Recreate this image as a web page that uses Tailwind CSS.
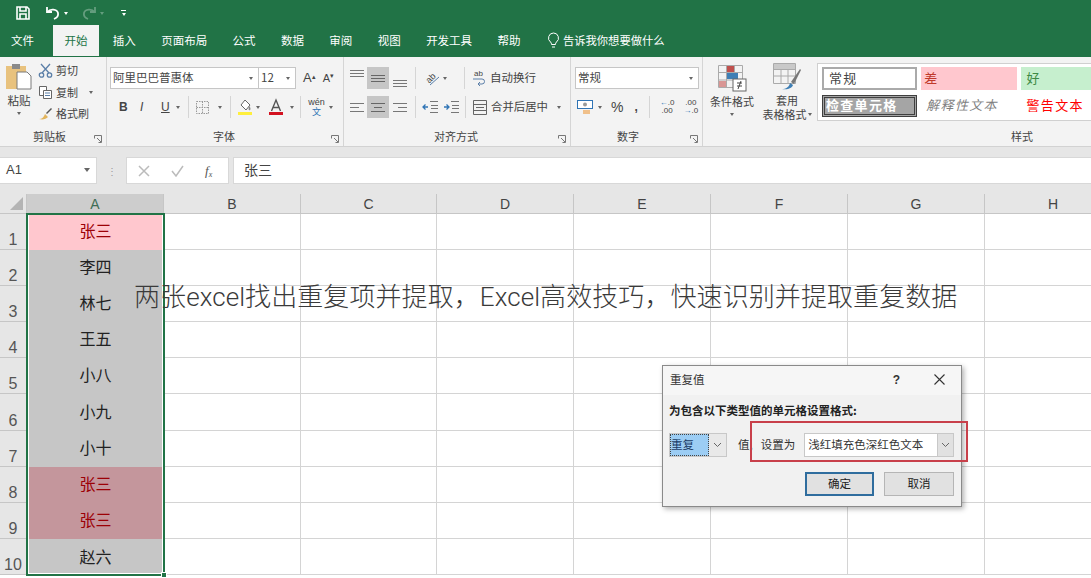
<!DOCTYPE html>
<html lang="zh-CN">
<head>
  <meta charset="UTF-8" />
  <title>重复值</title>
  <script src="https://cdn.jsdelivr.net/npm/@tailwindcss/browser@4"></script>
</head>
<body class="bg-white overflow-hidden font-['Noto_Sans_CJK_SC','Noto_Sans',sans-serif] text-[11px] text-[#444]">
<div class="relative w-[1091px] h-[578px] overflow-hidden bg-[#e6e6e6]">

  <!-- 标题栏 -->
  <div class="h-[26px] bg-[#217346] flex items-center pl-[15px] gap-[14px]">
    <svg width="16" height="16" viewBox="0 0 16 16" fill="none" stroke="#fff" stroke-width="1.6"><path d="M2 2h10l2 2v10H2z"/><path d="M5 2v4h6V2M5 14V9h6v5"/></svg>
    <div class="flex items-center gap-[3px]">
      <svg width="16" height="14" viewBox="0 0 16 14" fill="none" stroke="#fff" stroke-width="1.8"><path d="M2 1v5h5"/><path d="M2.5 6C5 2.5 12 3 13 7c.6 3-1.5 5-4 6"/></svg>
      <span class="w-0 h-0 border-x-[2.5px] border-x-transparent border-t-[3px] border-t-white"></span>
    </div>
    <div class="flex items-center gap-[3px] opacity-30 -ml-[1px]">
      <svg width="16" height="14" viewBox="0 0 16 14" fill="none" stroke="#fff" stroke-width="1.8"><path d="M14 1v5H9"/><path d="M13.5 6C11 2.5 4 3 3 7c-.6 3 1.5 5 4 6"/></svg>
      <span class="w-0 h-0 border-x-[2.5px] border-x-transparent border-t-[3px] border-t-white"></span>
    </div>
    <div class="flex flex-col items-center gap-[2px] ml-[3px]">
      <span class="w-[5px] h-[1px] bg-white"></span>
      <span class="w-0 h-0 border-x-[2.5px] border-x-transparent border-t-[3px] border-t-white"></span>
    </div>
  </div>

  <!-- 选项卡 -->
  <div class="h-[31px] bg-[#217346] flex items-center pl-[11px] pb-[2px] gap-[25.4px] text-[11.5px] text-white">
    <span>文件</span>
    <span class="relative ml-[5px] text-[#217346] z-0 before:absolute before:content-[''] before:-left-[11px] before:-right-[12px] before:-top-[7px] before:h-[31px] before:bg-[#f3f3f3] before:-z-10">开始</span>
    <span>插入</span>
    <span>页面布局</span>
    <span>公式</span>
    <span>数据</span>
    <span>审阅</span>
    <span>视图</span>
    <span>开发工具</span>
    <span>帮助</span>
    <span class="flex items-center gap-[3px] ml-[1px] text-[11.3px]">
      <svg width="13" height="17" viewBox="0 0 13 17" fill="none" stroke="#fff" stroke-width="1"><path d="M6.5 1a5 5 0 0 0-3 9c.8.7 1 1.5 1 2.5h4c0-1 .2-1.8 1-2.5a5 5 0 0 0-3-9zM5 15h3"/></svg>
      告诉我你想要做什么
    </span>
  </div>

  <!-- 功能区 -->
  <div class="h-[90px] bg-[#f3f3f3] border-b border-[#d2d2d2] flex">

    <!-- 剪贴板 -->
    <div class="w-[107px] shrink-0 border-r border-[#d5d5d5] flex flex-col">
      <div class="h-[71px] flex">
        <div class="w-[38px] flex flex-col items-center pt-[6px]">
          <svg width="28" height="28" viewBox="0 0 28 28"><rect x="1" y="3" width="20" height="23" fill="#e8c27e"/><rect x="7" y="1" width="8" height="5" fill="#8a8a8a"/><path d="M12 9h10l4 4v13H12z" fill="#fff" stroke="#7a7a7a"/></svg>
          <span class="text-[11.5px] leading-[14px] mt-[2px]">粘贴</span>
          <span class="mt-[5px] w-0 h-0 border-x-[2.5px] border-x-transparent border-t-[3px] border-t-[#666]"></span>
        </div>
        <div class="flex flex-col pt-[2px]">
          <div class="h-[22px] flex items-center gap-[3px]">
            <svg width="15" height="15" viewBox="0 0 15 15" fill="none" stroke="#5b7fa8" stroke-width="1.3"><path d="M3 1l8 9M12 1L4 10"/><circle cx="3.5" cy="12" r="2.2"/><circle cx="11.5" cy="12" r="2.2"/></svg>
            <span>剪切</span>
          </div>
          <div class="h-[22px] flex items-center gap-[3px]">
            <svg width="15" height="15" viewBox="0 0 15 15" fill="#fff" stroke="#666"><path d="M1.5 1.5h7v9h-7z"/><path d="M5.5 5.5h8v8h-8z"/><path d="M7 8h5M7 10.5h5" stroke="#5b7fa8"/></svg>
            <span>复制</span>
            <span class="ml-[8px] w-0 h-0 border-x-[2.5px] border-x-transparent border-t-[3px] border-t-[#666]"></span>
          </div>
          <div class="h-[21px] flex items-center gap-[3px]">
            <svg width="15" height="15" viewBox="0 0 15 15"><path d="M1 13c3 0 5-2 6-5l3 3c-2 2-5 3-9 2z" fill="#e2b45c"/><path d="M8 7l5-5 1 1-5 5z" fill="#555"/></svg>
            <span>格式刷</span>
          </div>
        </div>
      </div>
      <div class="relative flex-1 flex items-center justify-center pr-[7px] pb-[1px]">
        剪贴板
        <svg class="absolute right-[4px] bottom-[3px]" width="8" height="8" viewBox="0 0 8 8" fill="none" stroke="#777"><path d="M.5 3.5v-3h7v7h-3M3 3l4 4"/></svg>
      </div>
    </div>

    <!-- 字体 -->
    <div class="w-[237px] shrink-0 border-r border-[#d5d5d5] flex flex-col">
      <div class="h-[71px] flex flex-col pl-[3px] pt-[10px]">
        <div class="h-[22px] flex items-center">
          <div class="w-[149px] h-[22px] bg-white border border-[#c6c6c6] flex items-center justify-between pl-[2px] pr-[5px]">
            <span class="text-[11.5px]">阿里巴巴普惠体</span>
            <span class="w-0 h-0 border-x-[2.5px] border-x-transparent border-t-[3px] border-t-[#666]"></span>
          </div>
          <div class="w-[37px] h-[22px] bg-white border border-l-0 border-[#c6c6c6] flex items-center justify-between pl-[2px] pr-[5px]">
            <span class="text-[11.5px]">12</span>
            <span class="w-0 h-0 border-x-[2.5px] border-x-transparent border-t-[3px] border-t-[#666]"></span>
          </div>
          <span class="ml-[7px] text-[13px] font-['Liberation_Sans',sans-serif]">A<sup class="text-[7px]">▴</sup></span>
          <span class="ml-[7px] text-[11px] font-['Liberation_Sans',sans-serif]">A<sup class="text-[7px]">▾</sup></span>
        </div>
        <div class="h-[24px] mt-[6px] flex items-center pl-[9px] font-['Liberation_Sans',sans-serif]">
          <span class="w-[21px] font-bold text-[12px]">B</span>
          <span class="w-[21px] italic text-[12px]">I</span>
          <span class="w-[15px] underline text-[12px]">U</span>
          <span class="w-0 h-0 border-x-[2.5px] border-x-transparent border-t-[3px] border-t-[#666]"></span>
          <span class="ml-[8px] w-px h-[22px] bg-[#d5d5d5]"></span>
          <svg class="ml-[7px]" width="13" height="13" viewBox="0 0 13 13" fill="none" stroke="#999" stroke-dasharray="1.5 1"><path d="M.5.5h12v12H.5zM.5 6.5h12M6.5.5v12"/></svg>
          <span class="ml-[9px] w-0 h-0 border-x-[2.5px] border-x-transparent border-t-[3px] border-t-[#666]"></span>
          <span class="ml-[8px] w-px h-[22px] bg-[#d5d5d5]"></span>
          <svg class="ml-[6px]" width="16" height="18" viewBox="0 0 16 18"><path d="M4 7l4-5 5 5-4 5z" fill="#fff" stroke="#666"/><path d="M12 8c1.5 1.5 2 3 1 4s-2-.5-1-4z" fill="#888"/><rect x="1" y="14" width="14" height="3" fill="#ffef3c"/></svg>
          <span class="ml-[3px] w-0 h-0 border-x-[2.5px] border-x-transparent border-t-[3px] border-t-[#666]"></span>
          <svg class="ml-[8px]" width="16" height="18" viewBox="0 0 16 18" fill="none"><path d="M3.5 13L8 2l4.5 11M5 9.5h6" stroke="#555" stroke-width="1.4"/><rect x="1" y="14" width="14" height="3" fill="#d31120"/></svg>
          <span class="ml-[6px] w-0 h-0 border-x-[2.5px] border-x-transparent border-t-[3px] border-t-[#666]"></span>
          <span class="ml-[6px] w-px h-[22px] bg-[#d5d5d5]"></span>
          <span class="ml-[7px] w-[17px] flex flex-col items-center leading-[9px] text-[9px]">wén<span class="text-[#2f74b5] font-['Noto_Sans_CJK_SC',sans-serif]">文</span></span>
          <span class="ml-[4px] w-0 h-0 border-x-[2.5px] border-x-transparent border-t-[3px] border-t-[#666]"></span>
        </div>
      </div>
      <div class="relative flex-1 flex items-center justify-center pr-[2px] pb-[1px]">
        字体
        <svg class="absolute right-[4px] bottom-[3px]" width="8" height="8" viewBox="0 0 8 8" fill="none" stroke="#777"><path d="M.5 3.5v-3h7v7h-3M3 3l4 4"/></svg>
      </div>
    </div>

    <!-- 对齐方式 -->
    <div class="w-[227px] shrink-0 border-r border-[#d5d5d5] flex flex-col">
      <div class="h-[71px] flex flex-col pt-[10px]">
        <div class="h-[22px] flex items-center pl-[2px]">
          <span class="w-[21px] h-[22px] flex items-start justify-center pt-[3px]"><svg width="14" height="7" stroke="#777"><path d="M0 .5h14M0 3.5h14M0 6.5h14"/></svg></span>
          <span class="w-[22px] h-[22px] bg-[#c6c6c6] flex items-center justify-center"><svg width="14" height="7" stroke="#666"><path d="M0 .5h14M0 3.5h14M0 6.5h14"/></svg></span>
          <span class="w-[21px] h-[22px] flex items-end justify-center pb-[2px]"><svg width="14" height="7" stroke="#777"><path d="M0 .5h14M0 3.5h14M0 6.5h14"/></svg></span>
          <span class="ml-[5px] w-px h-[22px] bg-[#d5d5d5]"></span>
          <span class="ml-[6px] w-[18px] h-[16px] relative flex items-center justify-center">
            <span class="-rotate-45 text-[9px] leading-[9px] font-['Liberation_Sans',sans-serif]">ab</span>
            <svg class="absolute left-0 top-0" width="18" height="16" viewBox="0 0 18 16" fill="none" stroke="#5b7fa8"><path d="M8 15L17 7"/></svg>
          </span>
          <span class="ml-[3px] w-0 h-0 border-x-[2.5px] border-x-transparent border-t-[3px] border-t-[#666]"></span>
          <span class="ml-[17px] w-px h-[22px] bg-[#d5d5d5]"></span>
          <span class="ml-[7px] w-[13px] flex flex-col items-center">
            <span class="text-[8px] leading-[8px] font-['Liberation_Sans',sans-serif]">ab</span>
            <svg width="13" height="8" viewBox="0 0 13 8" fill="none" stroke="#5b7fa8"><path d="M1 1h9a2.5 2.5 0 0 1 0 5H6M8 4L6 6l2 2"/></svg>
          </span>
          <span class="ml-[5px] text-[11.5px]">自动换行</span>
        </div>
        <div class="h-[24px] mt-[6px] flex items-center pl-[2px]">
          <span class="w-[21px] h-[22px] flex items-center justify-center"><svg width="14" height="9" stroke="#777"><path d="M0 .5h14M0 4.5h9M0 8.5h14"/></svg></span>
          <span class="w-[22px] h-[22px] bg-[#c6c6c6] flex items-center justify-center"><svg width="14" height="9" stroke="#666"><path d="M0 .5h14M3 4.5h8M0 8.5h14"/></svg></span>
          <span class="w-[21px] h-[22px] flex items-center justify-center"><svg width="14" height="9" stroke="#777"><path d="M0 .5h14M5 4.5h9M0 8.5h14"/></svg></span>
          <span class="ml-[5px] w-px h-[22px] bg-[#d5d5d5]"></span>
          <svg class="ml-[6px]" width="16" height="12" viewBox="0 0 16 12" fill="none"><path d="M8 .5h8M9 4.5h7M9 7.5h7M8 11.5h8" stroke="#777"/><path d="M6 6H1M3.5 3.5L1 6l2.5 2.5" stroke="#2f74b5" stroke-width="1.3"/></svg>
          <svg class="ml-[5px]" width="16" height="12" viewBox="0 0 16 12" fill="none"><path d="M8 .5h8M9 4.5h7M9 7.5h7M8 11.5h8" stroke="#777"/><path d="M1 6h5M3.5 3.5L6 6 3.5 8.5" stroke="#2f74b5" stroke-width="1.3"/></svg>
          <span class="ml-[6px] w-px h-[22px] bg-[#d5d5d5]"></span>
          <svg class="ml-[7px]" width="14" height="15" viewBox="0 0 14 15" fill="none" stroke="#666"><path d="M.5.5h13v14H.5zM.5 4.5h13M.5 10.5h13M3 7.5h8"/></svg>
          <span class="ml-[4px] text-[11.4px]">合并后居中</span>
          <span class="ml-[9px] w-0 h-0 border-x-[2.5px] border-x-transparent border-t-[3px] border-t-[#666]"></span>
        </div>
      </div>
      <div class="relative flex-1 flex items-center justify-center pr-[2px] pb-[1px]">
        对齐方式
        <svg class="absolute right-[4px] bottom-[3px]" width="8" height="8" viewBox="0 0 8 8" fill="none" stroke="#777"><path d="M.5 3.5v-3h7v7h-3M3 3l4 4"/></svg>
      </div>
    </div>

    <!-- 数字 -->
    <div class="w-[132px] shrink-0 border-r border-[#d5d5d5] flex flex-col">
      <div class="h-[71px] flex flex-col pl-[4px] pt-[10px]">
        <div class="w-[124px] h-[22px] bg-white border border-[#c6c6c6] flex items-center justify-between pl-[2px] pr-[5px]">
          <span class="text-[11.5px]">常规</span>
          <span class="w-0 h-0 border-x-[2.5px] border-x-transparent border-t-[3px] border-t-[#666]"></span>
        </div>
        <div class="h-[24px] mt-[6px] flex items-center pl-[2px] font-['Liberation_Sans',sans-serif]">
          <svg width="16" height="16" viewBox="0 0 16 16"><rect x=".5" y="1.5" width="15" height="8" fill="#fff" stroke="#2f74b5"/><circle cx="8" cy="5.5" r="2" fill="#999"/><rect x="6" y="11" width="7" height="4" fill="#f0c08a"/></svg>
          <span class="ml-[5px] w-0 h-0 border-x-[2.5px] border-x-transparent border-t-[3px] border-t-[#666]"></span>
          <span class="ml-[9px] text-[14px]">%</span>
          <span class="ml-[11px] font-bold text-[12px]">,</span>
          <span class="ml-[11px] w-px h-[22px] bg-[#d5d5d5]"></span>
          <span class="ml-[10px] text-[8px] leading-[8px] text-center"><span class="text-[#2f74b5]">←</span>.0<br/>.00</span>
          <span class="ml-[9px] text-[8px] leading-[8px] text-center">.00<br/><span class="text-[#2f74b5]">→</span>.0</span>
        </div>
      </div>
      <div class="relative flex-1 flex items-center justify-center pr-[17px] pb-[1px]">
        数字
        <svg class="absolute right-[4px] bottom-[3px]" width="8" height="8" viewBox="0 0 8 8" fill="none" stroke="#777"><path d="M.5 3.5v-3h7v7h-3M3 3l4 4"/></svg>
      </div>
    </div>

    <!-- 样式 -->
    <div class="flex-1 flex flex-col overflow-hidden">
      <div class="h-[71px] flex">
        <div class="w-[57px] shrink-0 flex flex-col items-center pt-[7px] pl-[1px]">
          <svg width="30" height="28" viewBox="0 0 30 28" fill="none"><path d="M1.5 1.5h24v22h-24zM1.5 8.5h24M1.5 16h24M9.5 1.5v22M17.5 1.5v22" stroke="#aaa"/><rect x="10" y="2" width="7" height="6" fill="#c0504d"/><rect x="10" y="9" width="11" height="6" fill="#3f7fb5"/><rect x="2" y="17" width="7" height="6" fill="#d99694"/><rect x="16" y="15" width="13" height="12" fill="#fff" stroke="#666"/><path d="M20 19h5M20 22h5M24 17l-3 8" stroke="#444"/></svg>
          <span class="leading-[14px] mt-[2px]">条件格式</span>
          <span class="mt-[5px] w-0 h-0 border-x-[2.5px] border-x-transparent border-t-[3px] border-t-[#666]"></span>
        </div>
        <div class="w-[54px] shrink-0 flex flex-col items-center pt-[5px]">
          <svg width="30" height="30" viewBox="0 0 30 30" fill="none"><path d="M1.5 1.5h22v20h-22zM1.5 7.5h22M1.5 14h22M9 1.5v20M16 1.5v20" stroke="#aaa"/><rect x="2" y="2" width="21" height="5" fill="#c9c9c9"/><path d="M10 27c4 0 7-2 8-6l3 2c-1 3-5 5-11 4z" fill="#3f7fb5"/><path d="M19 20l9-13 1 1-7 14z" fill="#777"/></svg>
          <span class="leading-[14px] mt-[1px]">套用</span>
          <span class="leading-[14px] whitespace-nowrap flex items-center gap-[1px]">表格格式<span class="w-0 h-0 border-x-[2px] border-x-transparent border-t-[3px] border-t-[#666]"></span></span>
        </div>
        <div class="w-[276px] shrink-0 h-[58px] mt-[6px] ml-[3px] bg-white border border-[#d0d0d0] pl-[4px] pt-[3px] flex flex-col gap-[5px] text-[13px] tracking-[1.3px]">
          <div class="h-[23px] flex gap-[4px]">
            <span class="w-[96px] border-2 border-[#aaa] flex items-center pl-[5px] pb-[2px]">常规</span>
            <span class="w-[96px] bg-[#ffc7ce] text-[#c0392b] flex items-center pl-[3px] pb-[2px]">差</span>
            <span class="w-[72px] bg-[#c6efce] text-[#3e8a45] flex items-center pl-[6px] pb-[2px]">好</span>
          </div>
          <div class="h-[22px] flex gap-[4px]">
            <span class="w-[96px] border-[3px] border-double border-[#3f3f3f] bg-[#a5a5a5] text-white font-bold flex items-center pl-[1px] pb-[3px]">检查单元格</span>
            <span class="w-[96px] text-[#7f7f7f] italic flex items-center pl-[5px] pb-[3px]">解释性文本</span>
            <span class="w-[72px] text-[#ff0000] flex items-center pl-[6px] pb-[3px]">警告文本</span>
          </div>
        </div>
      </div>
      <div class="flex-1 flex items-center pl-[308px] pb-[1px]">样式</div>
    </div>
  </div>

  <!-- 编辑栏 -->
  <div class="h-[27px] mt-[10px] flex">
    <div class="w-[97px] bg-white border-y border-r border-[#d8d8d8] flex items-center justify-between pl-[6px] pr-[6px] pb-[1px] text-[13px] font-['Liberation_Sans',sans-serif]">
      A1
      <span class="w-0 h-0 border-x-[3.5px] border-x-transparent border-t-[4px] border-t-[#666]"></span>
    </div>
    <div class="w-[29px] flex items-center justify-center text-[#999] text-[10px]">⋮</div>
    <div class="w-[103px] bg-white border border-[#d8d8d8] flex items-center pl-[11px] gap-[21px] font-['Liberation_Serif',serif]">
      <svg width="12" height="12" viewBox="0 0 12 12" stroke="#bbb" stroke-width="1.5"><path d="M1 1l10 10M11 1L1 11"/></svg>
      <svg width="13" height="12" viewBox="0 0 13 12" fill="none" stroke="#bbb" stroke-width="1.5"><path d="M1 6l4 5 7-10"/></svg>
      <span class="italic text-[13px] text-[#555]">f<sub class="text-[8px]">x</sub></span>
    </div>
    <div class="flex-1 ml-[4px] bg-white border-y border-l border-[#d8d8d8] flex items-center pl-[10px] pb-[2px] text-[14px]">张三</div>
  </div>

  <!-- 工作表 -->
  <div class="relative mt-[10px]">
    <div id="sheet" class="grid grid-cols-[27px_137px_137px_136px_137px_137px_137px_137px_137px_106px] grid-rows-[20px_repeat(10,36.1px)_10px] bg-white"></div>
    <div class="absolute left-[26px] top-[19px] w-[139px] h-[363px] border-2 border-[#217346]"></div>
    <div class="absolute left-[161px] top-[378px] w-[6px] h-[6px] bg-[#217346] border border-white"></div>
  </div>

  <!-- 叠加标题 -->
  <div class="absolute left-[134px] top-[278px] whitespace-nowrap text-[26px] leading-[38px] tracking-[0.08px] text-[#3a3a3a] font-light font-['Roboto','Noto_Sans_CJK_SC',sans-serif]">两张excel找出重复项并提取，Excel高效技巧，快速识别并提取重复数据</div>

  <!-- 重复值 对话框 -->
  <div class="absolute left-[662px] top-[365px] w-[300px] h-[142px] bg-[#f1f1f1] border border-[#8a8a8a] shadow-[2px_2px_5px_rgba(0,0,0,0.3)] flex flex-col">
    <div class="h-[29px] flex items-center pl-[7px] pb-[2px] bg-[#f6f6f6] text-[#333]">
      <span class="flex-1 text-[11.5px]">重复值</span>
      <span class="font-bold text-[12px] mr-[34px] font-['Liberation_Sans',sans-serif]">?</span>
      <svg class="mr-[16px]" width="11" height="11" viewBox="0 0 11 11" stroke="#333" stroke-width="1.1"><path d="M.5.5l10 10M10.5.5l-10 10"/></svg>
    </div>
    <div class="pl-[6px] pt-[7px] font-bold text-[11.5px] text-[#222] leading-[16px]">为包含以下类型值的单元格设置格式:</div>
    <div class="flex items-center pl-[6px] mt-[15px] h-[24px] text-[#333] text-[11.5px]">
      <div class="w-[58px] h-[24px] flex border border-[#c8c8c8] bg-[#e9e9e9]">
        <span class="w-[39px] bg-[#9ccdf4] border border-dotted border-[#444] flex items-center text-[#1a3c66]">重复</span>
        <span class="flex-1 flex items-center justify-center"><svg width="9" height="6" fill="none" stroke="#666"><path d="M1 1l3.5 3.5L8 1"/></svg></span>
      </div>
      <span class="ml-[11px]">值,</span>
      <span class="ml-[8px]">设置为</span>
      <div class="ml-[9px] w-[150px] h-[24px] bg-white border border-[#c8c8c8] flex items-center justify-between pl-[3px]">
        <span>浅红填充色深红色文本</span>
        <span class="w-[16px] h-[22px] bg-[#e1e1e1] border-l border-[#c8c8c8] flex items-center justify-center"><svg width="9" height="6" fill="none" stroke="#666"><path d="M1 1l3.5 3.5L8 1"/></svg></span>
      </div>
    </div>
    <div class="flex pl-[142px] gap-[10px] mt-[15px] text-[11.5px] text-[#222]">
      <span class="w-[69px] h-[24px] bg-[#e1e1e1] border-2 border-[#2f6d9e] flex items-center justify-center">确定</span>
      <span class="w-[70px] h-[24px] bg-[#e1e1e1] border border-[#b5b5b5] flex items-center justify-center">取消</span>
    </div>
    <div class="absolute left-[87px] top-[55px] w-[218px] h-[41px] border-2 border-[#c8404a]"></div>
  </div>
</div>

<script>
  const columns = ["A","B","C","D","E","F","G","H"];
  const names = ["张三","李四","林七","王五","小八","小九","小十","张三","张三","赵六"];
  let html = '<div class="bg-[#e6e6e6] border-r border-b border-[#c6c6c6] flex items-end justify-end p-[3px]"><span class="w-0 h-0 border-l-[13px] border-l-transparent border-b-[13px] border-b-[#b4b4b4]"></span></div>';

  columns.forEach((c, i) => {
    const cls = i === 0
      ? "bg-[#cdcdcd] text-[#3f6d55]"
      : "bg-[#e6e6e6] text-[#444]";
    html += `<div class="${cls} border-r border-b border-[#c6c6c6] flex items-center justify-center pt-[2px] text-[14px] font-['Liberation_Sans',sans-serif]">${c}</div>`;
  });
  html += '<div class="bg-[#e6e6e6]"></div>';

  names.forEach((name, r) => {
    html += `<div class="bg-[#e6e6e6] border-r border-b border-[#c6c6c6] flex items-end justify-center leading-[18px] text-[16px] text-[#555] font-['Liberation_Sans',sans-serif]">${r + 1}</div>`;
    let cellCls = "bg-[#c6c6c6] text-[#222] pb-[4px]";
    if (r === 0) cellCls = "bg-[#ffc7ce] text-[#9c0006] pb-[4px]";
    if (r === 7 || r === 8) cellCls = "bg-[#c4969c] text-[#9c0006] pb-[4px]";
    if (r === 9) cellCls = "bg-[#c6c6c6] text-[#222] border-b-2 border-b-white";
    html += `<div class="${cellCls} border-x-2 border-x-white flex items-center justify-center text-[16px]">${name}</div>`;
    for (let i = 1; i < columns.length; i++) {
      html += '<div class="bg-white border-r border-b border-[#d4d4d4]"></div>';
    }
    html += '<div class="bg-white"></div>';
  });
  document.getElementById("sheet").innerHTML = html;
</script>
</body>
</html>
